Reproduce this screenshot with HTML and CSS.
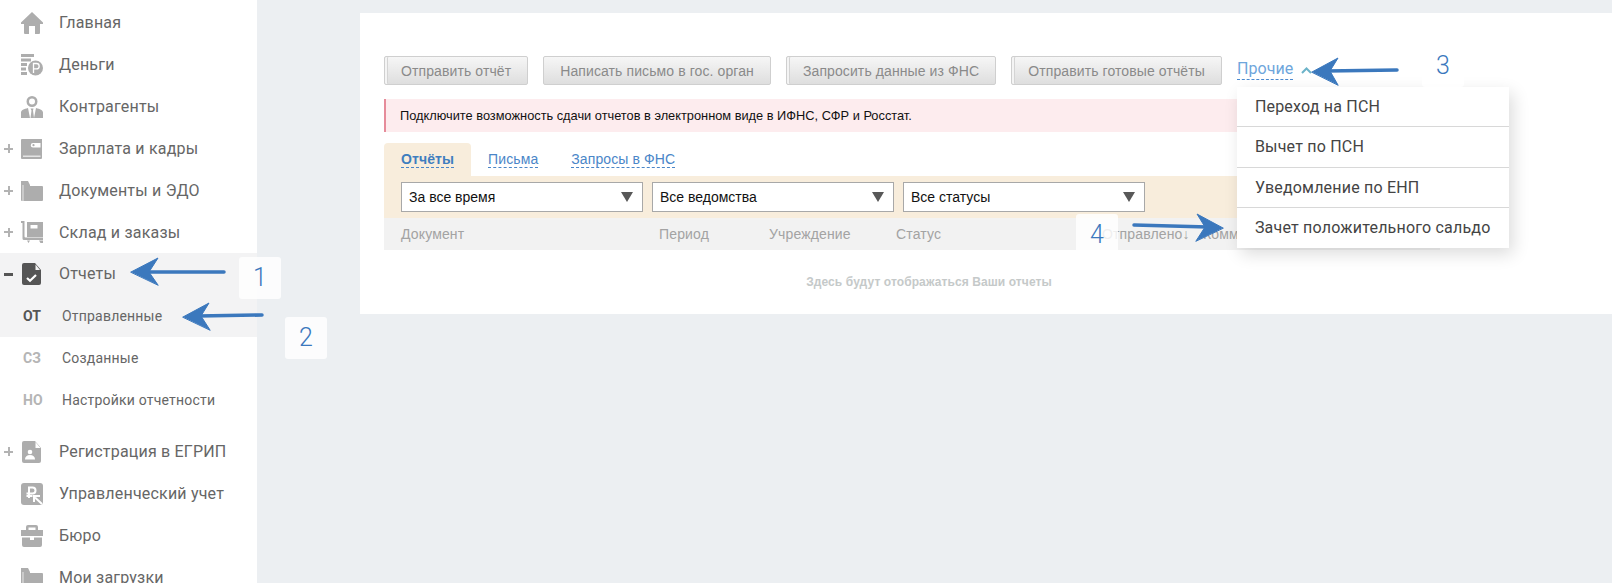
FILE: index.html
```html
<!DOCTYPE html>
<html lang="ru">
<head>
<meta charset="utf-8">
<title>Отчеты</title>
<link rel="stylesheet" href="styles.css">
</head>
<body>
<svg class="defs" width="0" height="0" aria-hidden="true">
  <symbol id="i-home" viewBox="0 0 22 22"><path d="M11 0 22 10.500V12h-3v9a1 1 0 0 1-1 1h-4v-8H8v8H4a1 1 0 0 1-1-1v-9H0v-1.500z"/></symbol>
  <symbol id="i-money" viewBox="0 0 22 22"><path d="M0 0h13v3H0zM0 4.500h10v3H0zM0 9h6v3H0zM0 13.500h5v3H0zM0 18h6v3H0z"/><circle cx="14.500" cy="14" r="7.500"/><path d="M12.500 19v-9.500h3a2.700 2.700 0 0 1 0 5.400h-3" fill="none" stroke="#fff" stroke-width="1.300"/></symbol>
  <symbol id="i-person" viewBox="0 0 22 22"><path fill-rule="evenodd" d="M11 0a5.500 5.500 0 1 1 0 11 5.500 5.500 0 0 1 0-11zm0 2.500a3 3 0 1 0 0 6 3 3 0 0 0 0-6z"/><path d="M7 12 9 22H0v-5.500C0 14 3 13 7 12zM15 12l-2 10h9v-5.500c0-2.500-3-3.500-7-4.500zM9.500 12.500h3l-.5 2 1 7.500H9.500l1-7.500z"/></symbol>
  <symbol id="i-wallet" viewBox="0 0 22 22"><path fill-rule="evenodd" d="M1 1h20v19a1 1 0 0 1-1 1H1a1 1 0 0 1-1-1V2a1 1 0 0 1 1-1zm11 4a2 2 0 0 0 0 4.500h7.500V5z"/><circle cx="12.500" cy="7.200" r="1.100"/><path d="M2 17.500h17.500V19H2z" fill="#e3e3e3"/></symbol>
  <symbol id="i-folder" viewBox="0 0 22 22"><path d="M0 1h7l2 4v16H1a1 1 0 0 1-1-1z"/><path d="M3.500 6H21a1 1 0 0 1 1 1v13a1 1 0 0 1-1 1H2.500V7a1 1 0 0 1 1-1z"/><path d="M2 5v16" stroke="#e8e8e8" stroke-width="1"/></symbol>
  <symbol id="i-cart" viewBox="0 0 22 22"><path fill-rule="evenodd" d="M6 1h16v15H6zm3.500 3v3.500h7V4z"/><path d="M0 0h3.500v15.500a1 1 0 0 0 1 1H22V19H3a1.500 1.500 0 0 1-1.500-1.500V2H0z"/><path d="M6 19.500h3L7.500 22zM18 19.500h4V22h-2.500z"/></symbol>
  <symbol id="i-report" viewBox="0 0 22 22"><path fill-rule="evenodd" d="M3 0h11l6 7v13a2 2 0 0 1-2 2H3a2 2 0 0 1-2-2V2a2 2 0 0 1 2-2z"/><path d="M14.500 1.500 19 7h-4.500z" fill="#f3f3f3"/><path d="m6 15 3 2.800 6-5.800" fill="none" stroke="#fff" stroke-width="2.200"/></symbol>
  <symbol id="i-reg" viewBox="0 0 22 22"><path d="M3 0h11l6 7v13a2 2 0 0 1-2 2H3a2 2 0 0 1-2-2V2a2 2 0 0 1 2-2z"/><path d="M14.500 1 19.500 7h-5z" fill="#fff"/><circle cx="9" cy="11" r="2.300" fill="#fff"/><path d="M4 18.500c0-3 2-4.500 5-4.500s5 1.500 5 4.500z" fill="#fff"/></symbol>
  <symbol id="i-mgmt" viewBox="0 0 22 22"><rect width="22" height="22" rx="3"/><path d="M8 15V4.500h3.500a3 3 0 0 1 0 6H5.500M5.500 13h6" fill="none" stroke="#fff" stroke-width="2"/><path d="M21 21 14 14.500M13 19v-6h6" fill="none" stroke="#fff" stroke-width="2"/></symbol>
  <symbol id="i-case" viewBox="0 0 22 22"><path fill-rule="evenodd" d="M7 0h8a2 2 0 0 1 2 2v3h5v6H0V5h5V2a2 2 0 0 1 2-2zm.500 2.500V5h7V2.500z"/><path d="M1 12.500h8V15h4v-2.500h8V20a2 2 0 0 1-2 2H3a2 2 0 0 1-2-2z"/></symbol>
</svg>

<div class="app">
  <nav class="side">
    <a class="row"><span class="pm"></span><svg class="ico"><use href="#i-home"/></svg><span class="lbl">Главная</span></a>
    <a class="row"><span class="pm"></span><svg class="ico"><use href="#i-money"/></svg><span class="lbl">Деньги</span></a>
    <a class="row"><span class="pm"></span><svg class="ico"><use href="#i-person"/></svg><span class="lbl">Контрагенты</span></a>
    <a class="row"><span class="pm plus"></span><svg class="ico"><use href="#i-wallet"/></svg><span class="lbl">Зарплата и кадры</span></a>
    <a class="row"><span class="pm plus"></span><svg class="ico"><use href="#i-folder"/></svg><span class="lbl">Документы и ЭДО</span></a>
    <a class="row"><span class="pm plus"></span><svg class="ico"><use href="#i-cart"/></svg><span class="lbl">Склад и заказы</span></a>
    <a class="row active"><span class="pm minus"></span><svg class="ico"><use href="#i-report"/></svg><span class="lbl">Отчеты</span></a>
    <a class="row sub active"><span class="abbr">ОТ</span><span class="sublbl">Отправленные</span></a>
    <a class="row sub"><span class="abbr">СЗ</span><span class="sublbl">Созданные</span></a>
    <a class="row sub last"><span class="abbr">НО</span><span class="sublbl">Настройки отчетности</span></a>
    <a class="row"><span class="pm plus"></span><svg class="ico"><use href="#i-reg"/></svg><span class="lbl">Регистрация в ЕГРИП</span></a>
    <a class="row"><span class="pm"></span><svg class="ico"><use href="#i-mgmt"/></svg><span class="lbl">Управленческий учет</span></a>
    <a class="row"><span class="pm"></span><svg class="ico"><use href="#i-case"/></svg><span class="lbl">Бюро</span></a>
    <a class="row"><span class="pm"></span><svg class="ico"><use href="#i-folder"/></svg><span class="lbl">Мои загрузки</span></a>
  </nav>

  <main class="main">
    <section class="card">
      <div class="toolbar">
        <button class="btn edge">Отправить отчёт</button>
        <button class="btn">Написать письмо в гос. орган</button>
        <button class="btn edge">Запросить данные из ФНС</button>
        <button class="btn edge">Отправить готовые отчёты</button>
        <div class="more">
          <span class="more-link">Прочие</span>
          <svg class="chev" width="11" height="7" viewBox="0 0 11 7"><path d="M1 6 5.500 1.500 10 6" fill="none" stroke="#6cb3c9" stroke-width="2"/></svg>
          <ul class="menu">
            <li>Переход на ПСН</li>
            <li>Вычет по ПСН</li>
            <li>Уведомление по ЕНП</li>
            <li>Зачет положительного сальдо</li>
          </ul>
        </div>
      </div>
      <div class="alert">Подключите возможность сдачи отчетов в электронном виде в ИФНС, СФР и Росстат.</div>
      <div class="tabs">
        <div class="tab on"><span>Отчёты</span></div>
        <div class="tab"><span>Письма</span></div>
        <div class="tab"><span>Запросы в ФНС</span></div>
      </div>
      <div class="filters">
        <div class="sel">За все время</div>
        <div class="sel">Все ведомства</div>
        <div class="sel">Все статусы</div>
      </div>
      <div class="thead">
        <span>Документ</span><span>Период</span><span>Учреждение</span><span>Статус</span><span>Отправлено↓</span><span>Комментарий</span>
      </div>
      <p class="empty">Здесь будут отображаться Ваши отчеты</p>
    </section>
  </main>
</div>

<div class="note n1">1</div>
<div class="note n2">2</div>
<div class="note n3">3</div>
<div class="note n4">4</div>
<svg class="arrows" width="1612" height="583" viewBox="0 0 1612 583" aria-hidden="true">
  <g fill="#3b78bd" stroke="#3b78bd" stroke-linecap="round">
    <path d="M146 272H224" stroke-width="3.500"/><path d="M131 272 158 258 149 272 158 285z" stroke-width="1"/>
    <path d="M198 316 262 315" stroke-width="3.500"/><path d="M183 317 209 303 201 316 210 330z" stroke-width="1"/>
    <path d="M1326 71 1397 70" stroke-width="3.500"/><path d="M1312 72 1338 58 1330 71 1338 85z" stroke-width="1"/>
    <path d="M1134 225 1208 227" stroke-width="3.500"/><path d="M1223 228 1197 214 1205 227 1196 241z" stroke-width="1"/>
  </g>
</svg>
</body>
</html>
```
FILE: styles.css
```css
* { box-sizing: border-box; }
html, body { margin: 0; height: 583px; overflow: hidden; }
body { background: #eceff2; font-family: "Liberation Sans", Arial, sans-serif; position: relative; }
.defs { display: block; height: 0; }

.app { display: flex; height: 583px; overflow: hidden; }

/* sidebar */
.side { width: 257px; flex: none; background: #fff; padding-top: 2px; font-family: Roboto, sans-serif; }
.row { display: flex; align-items: center; height: 41.9px; color: #666; }
.row.sub.active { height: 41.5px; }
.row.active { background: #f3f3f4; }
.row.last { margin-bottom: 10.400px; }
.pm { width: 9px; height: 9px; margin: 0 8px 0 4px; flex: none; }
.plus { background: linear-gradient(#b3b3b3, #b3b3b3) center / 9px 2px no-repeat, linear-gradient(#b3b3b3, #b3b3b3) center / 2px 9px no-repeat; }
.minus { background: linear-gradient(#555, #555) center / 9px 3px no-repeat; }
.ico { width: 22px; height: 22px; flex: none; fill: #adadad; }
.active .ico { fill: #555; }
.lbl { margin-left: 16px; font-size: 16px; letter-spacing: .2px; }
.active .lbl { margin-top: -1px; }
.abbr { width: 62px; padding-left: 23px; font-size: 14px; font-weight: 700; color: #b5b5b5; flex: none; }
.active .abbr { color: #555; }
.sublbl { font-size: 14px; letter-spacing: .2px; }

/* content */
.main { flex: 1; padding: 13px 0 0 103px; }
.card { background: #fff; height: 301px; padding: 43px 0 0 24px; }

.toolbar { display: flex; gap: 15px; height: 29px; width: 1056px; }
.btn { height: 29px; padding: 0 16px; border: 1px solid #cfcfcf; border-radius: 2px; background: linear-gradient(#f6f6f6, #dedede); color: #8a8a8a; font: 14px "Liberation Sans", Arial, sans-serif; letter-spacing: .1px; }
.btn.edge { box-shadow: inset 2px 0 #f4f4f4, inset 3px 0 #d4d4d4; }

.more { position: relative; display: flex; align-items: center; gap: 8px; height: 24px; font-family: Roboto, sans-serif; }
.more-link { color: #6ea6dc; font-size: 16px; letter-spacing: .1px; border-bottom: 1px dashed #4b8ad0; line-height: 21px; margin-top: 2px; }
.chev { margin-top: 4px; }
.menu { position: absolute; top: 31px; left: 0; width: 272px; height: 161px; margin: 0; padding: 0; list-style: none; background: #fff; box-shadow: 4px 6px 16px rgba(0, 0, 0, .14); z-index: 5; }
.menu li { display: flex; align-items: center; height: 40.250px; padding-left: 18px; border-bottom: 1px solid #d8d8d8; color: #444; font-size: 16px; letter-spacing: .2px; }
.menu li:last-child { border-bottom: 0; }

.alert { width: 1056px; height: 33px; margin-top: 14px; padding-left: 14px; line-height: 33px; background: #fdecee; border-left: 2px solid #e68c9a; color: #111; font-size: 12.800px; }

.tabs { display: flex; gap: 1px; height: 33px; margin-top: 11px; letter-spacing: .1px; }
.tab { padding: 0 16px; font-size: 14px; line-height: 20px; color: #4a86c8; display: flex; align-items: center; }
.tab span { border-bottom: 1px dashed #4a86c8; line-height: 16px; }
.tab.on { padding: 0 17px; background: #f8eddc; border-radius: 4px 4px 0 0; font-weight: 700; color: #3f7ebf; }

.filters { display: flex; gap: 9px; width: 1056px; height: 42px; padding: 6px 17px; background: #f8eddc; }
.sel { width: 242px; height: 30px; padding-left: 7px; line-height: 28px; background: #fff; border: 1px solid #a8a8a8; color: #111; font-size: 14px; display: flex; align-items: center; justify-content: space-between; }
.sel::after { content: ""; margin-right: 9px; border-style: solid; border-width: 10px 6px 0; border-color: #585858 transparent transparent; }

.thead { display: grid; grid-template-columns: 258px 110px 127px 206px 101px 1fr; align-items: center; width: 1056px; height: 32px; padding-left: 17px; background: #f2f2f2; color: #a3a3a3; font-size: 14px; letter-spacing: .15px; }
.empty { margin: 25px 0 0; padding-left: 34px; width: 1056px; text-align: center; font-size: 12px; font-weight: 700; letter-spacing: .1px; color: #c5c9c9; }

/* annotations laid over the screenshot */
.note { position: absolute; width: 42px; height: 42px; border-radius: 3px; background: rgba(255, 255, 255, .82); color: #3b78bd; font: 300 25px/42px Roboto, sans-serif; text-align: center; z-index: 6; }
.n1 { left: 239px; top: 257px; }
.n2 { left: 285px; top: 317px; }
.n3 { left: 1422px; top: 45px; }
.n4 { left: 1076px; top: 214px; }
.arrows { position: absolute; left: 0; top: 0; z-index: 7; }
```
